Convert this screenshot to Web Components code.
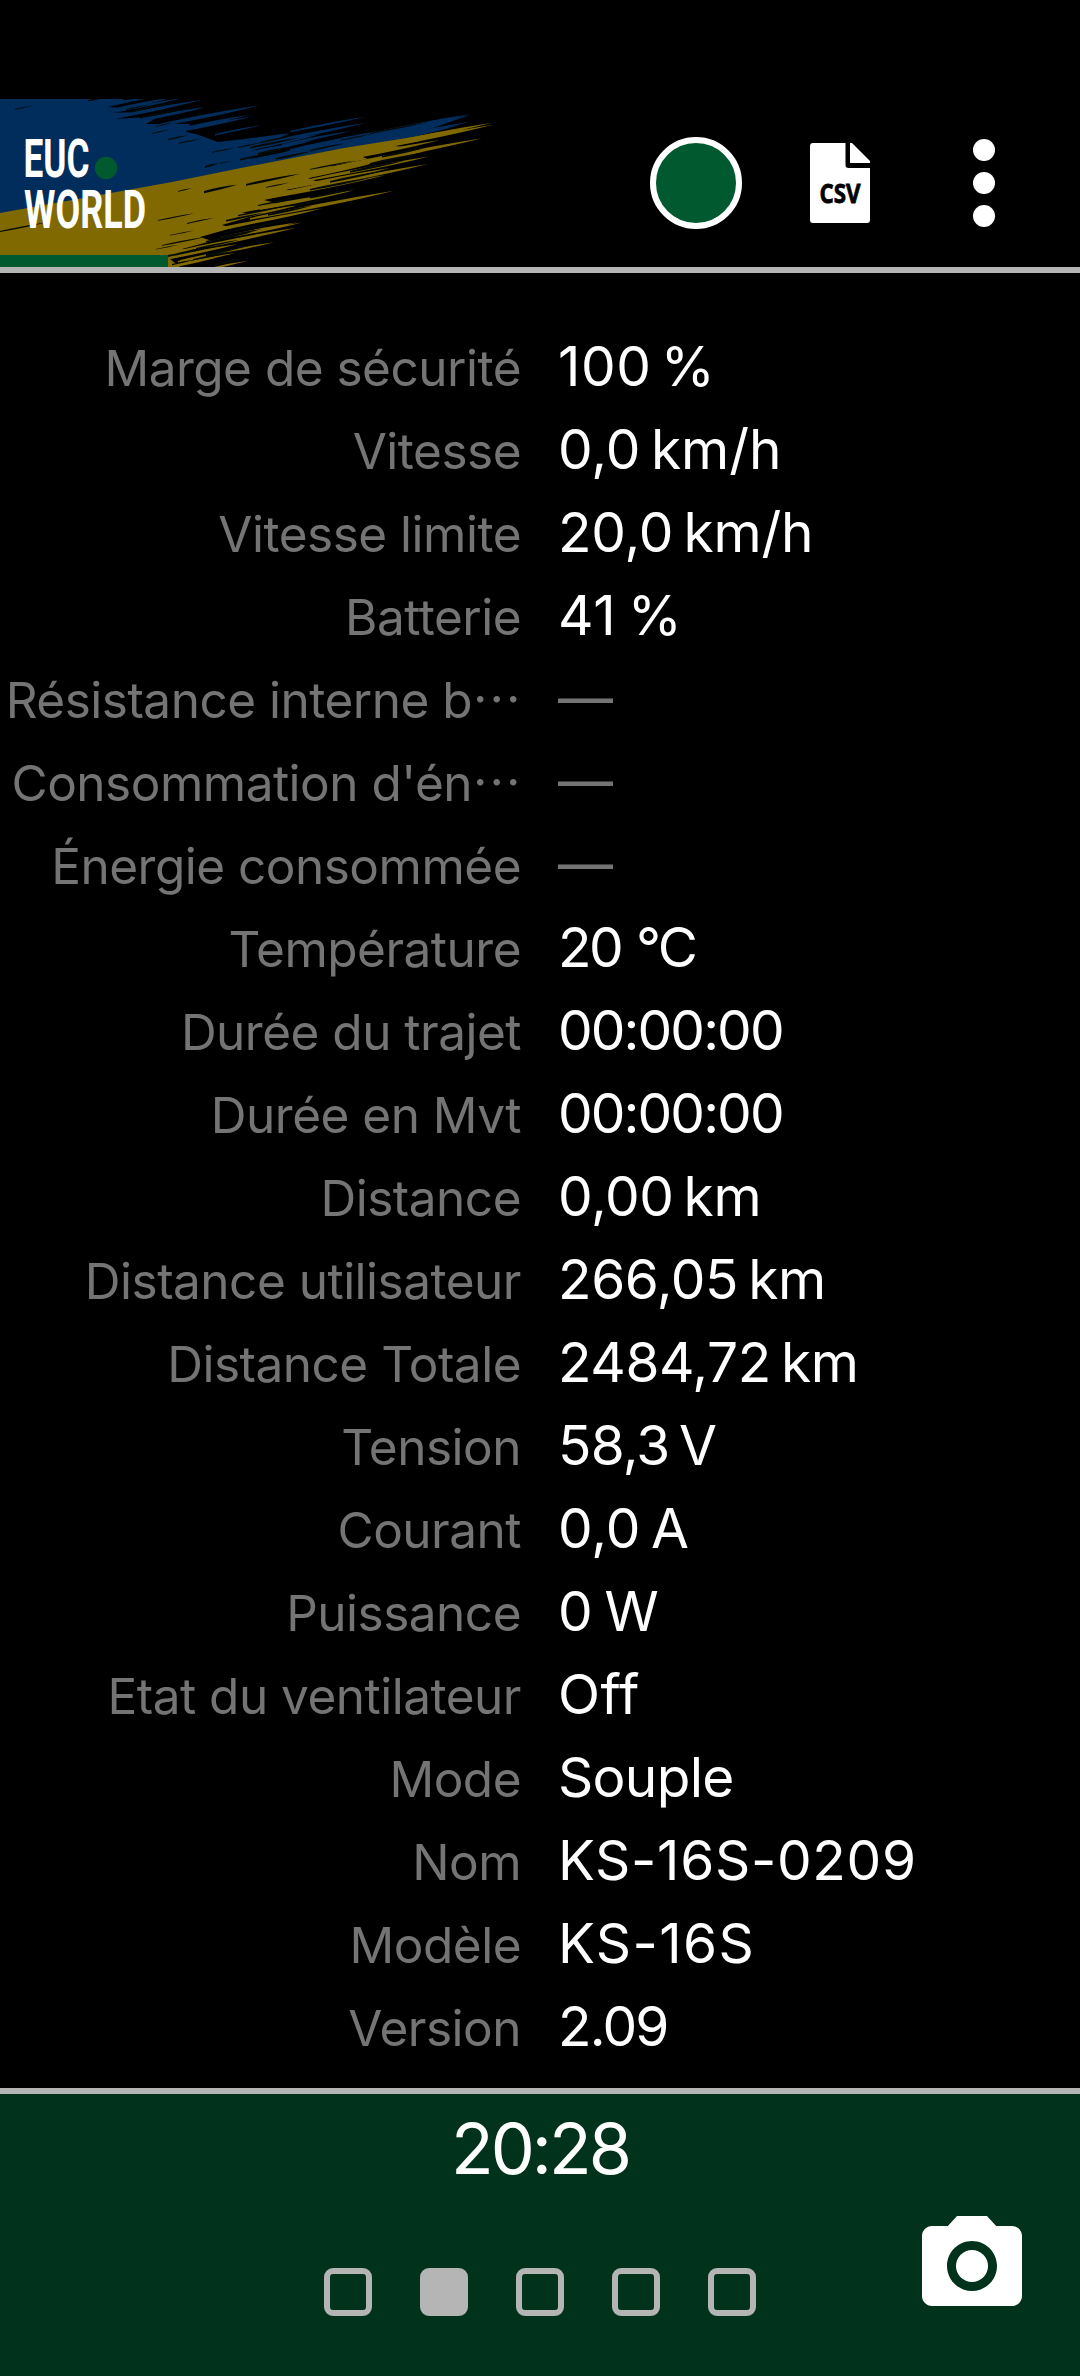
<!DOCTYPE html>
<html lang="fr">
<head>
<meta charset="utf-8">
<title>EUC World</title>
<style>
    html, body {
        margin: 0;
        background: #000;
    }
    body {
        width: 1080px;
        height: 2376px;
        overflow: hidden;
        font-family: Inter, "Noto Sans CJK JP", sans-serif;
        color: #fff;
    }
</style>
</head>
<body>
<wheel-app>
    <app-bar slot="header"></app-bar>
    <metric-row label="Marge de sécurité" track=".6" space="-7">100 %</metric-row>
    <metric-row label="Vitesse">0,0 km/h</metric-row>
    <metric-row label="Vitesse limite" track="-.2">20,0 km/h</metric-row>
    <metric-row label="Batterie" track=".8">41 %</metric-row>
    <metric-row label="Résistance interne b…" empty>—</metric-row>
    <metric-row label="Consommation d'én…" empty>—</metric-row>
    <metric-row label="Énergie consommée" empty>—</metric-row>
    <metric-row label="Température" track="-2.6" space="2">20 °C</metric-row>
    <metric-row label="Durée du trajet" track="-1.900">00:00:00</metric-row>
    <metric-row label="Durée en Mvt" track="-1.900">00:00:00</metric-row>
    <metric-row label="Distance" track="-.4">0,00 km</metric-row>
    <metric-row label="Distance utilisateur" track="-.4">266,05 km</metric-row>
    <metric-row label="Distance Totale" track="-.4">2484,72 km</metric-row>
    <metric-row label="Tension" track="-.8">58,3 V</metric-row>
    <metric-row label="Courant">0,0 A</metric-row>
    <metric-row label="Puissance" track=".7">0 W</metric-row>
    <metric-row label="Etat du ventilateur" track=".4">Off</metric-row>
    <metric-row label="Mode" track="-.7">Souple</metric-row>
    <metric-row label="Nom" track=".7">KS-16S-0209</metric-row>
    <metric-row label="Modèle" track="1.4">KS-16S</metric-row>
    <metric-row label="Version" track="-1.800">2.09</metric-row>
    <status-footer slot="footer" pages="5" current="1">20:28</status-footer>
</wheel-app>

<script>
class WheelApp extends HTMLElement {
    constructor() {
        super();
        this.attachShadow({mode: 'open'}).innerHTML = `
            <style>
                :host {
                    display: flex;
                    flex-direction: column;
                    height: 2376px;
                    background: #000;
                }
                main {
                    flex: 1;
                    padding-top: 52px;
                }
            </style>
            <slot name="header"></slot>
            <main><slot></slot></main>
            <slot name="footer"></slot>
        `;
    }
}
customElements.define('wheel-app', WheelApp);

// [x, y, length, thickness], all strokes follow the same brush slope
const BLUE_STROKES = [
    [110,5,62,1.8],[112,10,60,2.4],[104,14,80,1.6],[106,19,96,2.6],[120,24,84,2],[140,21,64,1.6],
    [150,27,110,2.2],[170,33,82,1.8],[180,29,70,1.8],[215,35,46,1.4],[205,54,96,2.4],
    [226,53,94,3],[250,46,90,2.4],[270,42,96,2],[282,45,70,1.6],[225,58,90,3],[290,32,76,1.2],
    [290,50,76,2],[300,50,100,2.4],[350,42,78,2],[370,34,100,1.4],[360,45,100,2.4],[330,48,90,2.4],[390,38,80,1.8]
];
const YELLOW_STROKES = [
    [350,53,143,2],[380,45,112,1.6],[330,62,110,2],[320,70,162,1.8],[300,76,126,2],[300,82,130,1.5],
    [290,88,100,2],[280,93,148,1.7],[270,98,116,1.5],[280,105,70,2],[260,109,94,2],[250,119,144,1.7],
    [246,124,76,1.7],[230,127,90,2],[236,136,66,1.5],[220,138,76,2],[200,147,96,1.8],[196,149,70,1.5],
    [180,161,94,1.7],[180,151,80,2],[178,162,64,1.8],[172,166,62,1.8],[166,168,54,2],[210,169,38,1.4],
    [170,158,68,2],[200,133,80,2.4],[220,121,80,2.4],[240,112,80,2],[260,99,80,2.4],[290,80,82,2.4]
];
const GAP_STROKES = [
    [15,10,18,.7],[88,1,38,1.4],[126,10,24,1],[156,27,18,.8],[152,34,18,1],[168,40,20,1.2],[178,44,24,.8],
    [205,67,14,2],[220,64,12,.8],[212,53,24,.8],[238,48,24,.9],[258,54,34,2],[276,59,36,1.8],[310,51,34,1.2],
    [240,60,50,1.4],[250,48,50,1.6],[130,12,50,1.4],[140,18,54,1.4],[370,34,60,.9],
    [260,43,34,1.2],[340,41,34,.8],[0,132,48,.9],[204,92,33,2.2],[246,85,54,1.7],[178,92,14,.7],[158,121,36,.8],
    [187,124,27,1],[226,121,38,1.5],[238,116,50,1.2],[258,106,42,1.1],[170,136,25,.6],[150,160,36,2],[174,155,42,1.8],
    [162,146,45,.8],[206,142,46,1.6],[220,138,42,1.7],[224,133,54,1.3],[250,128,40,2],[268,115,44,1.8],[294,106,40,2],
    [310,98,54,1.6],[310,90,65,1.5],[330,82,54,1.7],[350,72,55,1.8],[370,64,52,1.6],[310,70,45,.8],[382,57,44,1.5],
    [172,165,22,1.2],[214,165,35,2],[206,155,42,2],[196,149,44,1.2],[266,88,24,.7],[156,150,22,.6],[193,160,50,1.4]
];

function brush(strokes, fill) {
    const d = strokes.map(([x, y, len, w]) => {
        const rise = len * 0.19;
        return `M${x} ${y}q${len * .45} ${-rise * .5 - w * .6} ${len} ${-rise}q${-len * .4} ${rise * .5 + w * .5} ${-len} ${rise + w}z`;
    }).join('');
    return `<path fill="${fill}" d="${d}"/>`;
}

class EucLogo extends HTMLElement {
    connectedCallback() {
        this.attachShadow({mode: 'open'}).innerHTML = `
            <style>
                :host { display: block; width: 520px; height: 168px; }
                svg { display: block; }
                text { font: 700 54px Roboto, sans-serif; fill: #fff; }
            </style>
            <svg width="520" height="168" viewBox="0 0 520 168">
                <path fill="#002d5c" d="M0 0H122L130 3L108 8L126 9L106 14L136 13L116 20L160 17L146 25L190 25L186 33L196 35L218 43L244 40L290 34L262 47L250 53L262 55L250 60L280 54L345 38L400 28L440 21L470 16L430 30L450 29L413 38L241 72L0 117Z"/>
                ${brush(BLUE_STROKES, '#002d5c')}
                <path fill="#806900" d="M0 114L172 83L241 69L344 49L413 38L440 33L420 42L395 47L404 48L360 57L368 60L330 67L342 71L308 79L318 83L286 91L300 93L264 101L276 104L240 113L256 116L222 126L232 129L200 138L212 142L182 150L196 153L170 160L180 168H0Z"/>
                ${brush(YELLOW_STROKES, '#806900')}
                ${brush(GAP_STROKES, '#050a06')}
                <rect y="156" width="168" height="12" fill="#00592f"/>
                <circle cx="106" cy="69" r="11.200" fill="#00592f"/>
                <text x="23.500" y="78" textLength="66" lengthAdjust="spacingAndGlyphs">EUC</text>
                <text x="24" y="128.500" textLength="122" lengthAdjust="spacingAndGlyphs">WORLD</text>
            </svg>
        `;
    }
}
customElements.define('euc-logo', EucLogo);

class AppBar extends HTMLElement {
    connectedCallback() {
        this.attachShadow({mode: 'open'}).innerHTML = `
            <style>
                :host {
                    display: flex;
                    justify-content: space-between;
                    box-sizing: border-box;
                    height: 273px;
                    padding-top: 99px;
                    border-bottom: 6px solid #b5b5b5;
                }
                nav {
                    display: flex;
                    align-items: center;
                    gap: 68px;
                    padding-right: 85px;
                }
                .status {
                    box-sizing: border-box;
                    width: 92px;
                    height: 92px;
                    border: 6px solid #fff;
                    border-radius: 50%;
                    background: #00592f;
                }
                .csv text { font: 700 27px "Open Sans", sans-serif; }
                .more { margin-left: 35px; }
                svg { display: block; }
            </style>
            <euc-logo></euc-logo>
            <nav>
                <div class="status"></div>
                <svg class="csv" width="60" height="80" viewBox="0 0 60 80">
                    <path fill="#fff" d="M3 0H35.500V22q0 3 3 3H60V77q0 3-3 3H3q-3 0-3-3V3q0-3 3-3z"/>
                    <path fill="#fff" d="M40 0H42L60 18V20H40z"/>
                    <text x="9.500" y="59.500" textLength="41" lengthAdjust="spacingAndGlyphs" stroke="#000" stroke-width=".8">CSV</text>
                </svg>
                <svg class="more" width="22" height="88" viewBox="0 0 22 88" fill="#fff">
                    <circle cx="11" cy="11" r="11"/>
                    <circle cx="11" cy="44" r="11"/>
                    <circle cx="11" cy="77" r="11"/>
                </svg>
            </nav>
        `;
    }
}
customElements.define('app-bar', AppBar);

class MetricRow extends HTMLElement {
    connectedCallback() {
        // the ellipsis is drawn at mid height, as the CJK face has it
        const label = this.getAttribute('label').replace('…', '<span class="more" lang="ja">…</span>');

        this.attachShadow({mode: 'open'}).innerHTML = `
            <style>
                :host {
                    display: grid;
                    grid-template-columns: 521px 1fr;
                    column-gap: 37px;
                    align-items: baseline;
                    height: 83px;
                    line-height: 83px;
                    white-space: nowrap;
                }
                .label {
                    text-align: right;
                    font-size: 49.500px;
                    font-weight: 400;
                    letter-spacing: -.5px;
                    color: #747474;
                }
                .more {
                    font-family: "Noto Sans CJK JP", sans-serif;
                    line-height: 0;
                }
                .value {
                    font-size: 55px;
                    word-spacing: ${this.getAttribute('space') || -5}px;
                    letter-spacing: ${this.getAttribute('track') || 0}px;
                }
                :host([empty]) .value {
                    color: #747474;
                }
            </style>
            <div class="label">${label}</div>
            <div class="value"><slot></slot></div>
        `;
    }
}
customElements.define('metric-row', MetricRow);

class StatusFooter extends HTMLElement {
    connectedCallback() {
        const count = Number(this.getAttribute('pages'));
        const current = Number(this.getAttribute('current'));
        const dots = Array.from({length: count}, (_, i) => `<i class="${i === current ? 'on' : ''}"></i>`).join('');

        this.attachShadow({mode: 'open'}).innerHTML = `
            <style>
                :host {
                    display: grid;
                    grid-template-columns: 1fr auto 1fr;
                    grid-template-rows: 112px 170px;
                    box-sizing: border-box;
                    height: 288px;
                    border-top: 6px solid #b5b5b5;
                    background: #00321c;
                }
                .time {
                    grid-column: 1 / -1;
                    text-align: center;
                    font-size: 70px;
                    line-height: 110px;
                    letter-spacing: -3px;
                }
                .dots {
                    grid-column: 2;
                    display: flex;
                    gap: 48px;
                    padding-top: 62px;
                }
                i {
                    box-sizing: border-box;
                    width: 48px;
                    height: 48px;
                    border: 6px solid #b5b5b5;
                    border-radius: 9px;
                }
                .on { background: #b5b5b5; }
                svg {
                    justify-self: end;
                    margin-right: 48px;
                }
            </style>
            <div class="time"><slot></slot></div>
            <div class="dots">${dots}</div>
            <svg width="120" height="120" viewBox="0 0 24 24" fill="#fff">
                <circle cx="12" cy="12" r="3.200"/>
                <path d="M9 2L7.170 4H4c-1.100 0-2 .9-2 2v12c0 1.100.9 2 2 2h16c1.100 0 2-.9 2-2V6c0-1.100-.9-2-2-2h-3.170L15 2H9zm3 15c-2.760 0-5-2.240-5-5s2.240-5 5-5 5 2.240 5 5-2.240 5-5 5z"/>
            </svg>
        `;
    }
}
customElements.define('status-footer', StatusFooter);
</script>
</body>
</html>
